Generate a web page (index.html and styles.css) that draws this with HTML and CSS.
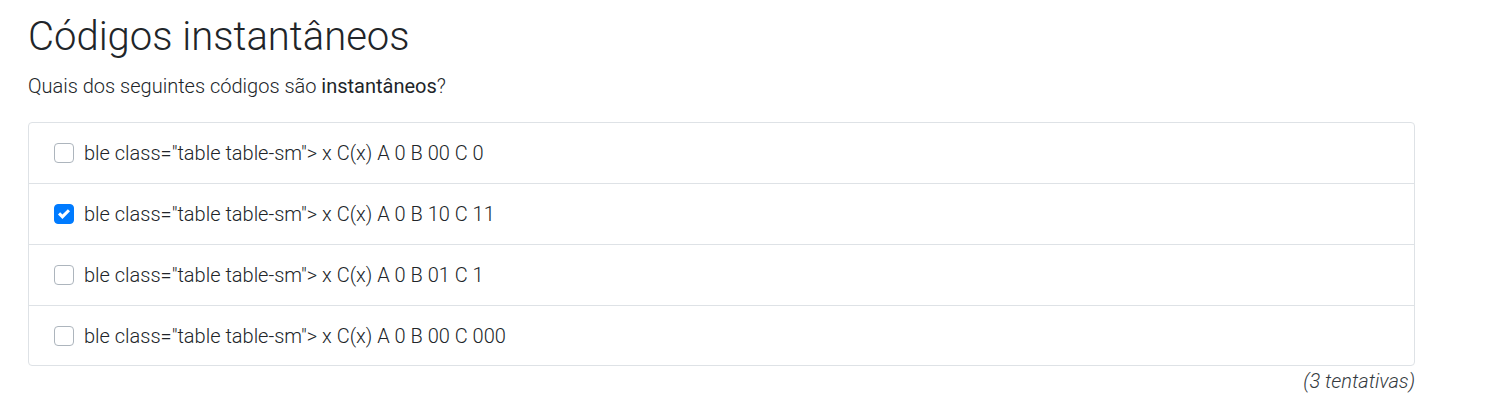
FILE: index.html
```html
<!DOCTYPE html>
<html lang="pt">
<head>
<meta charset="utf-8">
<link rel="stylesheet" href="styles.css">
</head>
<body>
<div class="page">
  <h1 class="title">Códigos instantâneos</h1>
  <p class="question">Quais dos seguintes códigos são <strong>instantâneos</strong>?</p>
  <ul class="options">
    <li class="option"><span class="box"></span><span class="label">ble class="table table-sm"&gt; x C(x) A 0 B 00 C 0</span></li>
    <li class="option"><span class="box checked"><svg viewBox="0 0 8 8" width="12" height="12"><path d="M6.564.75l-3.59 3.612-1.538-1.55L0 4.26l2.974 2.99L8 2.193z" fill="#fff"/></svg></span><span class="label">ble class="table table-sm"&gt; x C(x) A 0 B 10 C 11</span></li>
    <li class="option"><span class="box"></span><span class="label">ble class="table table-sm"&gt; x C(x) A 0 B 01 C 1</span></li>
    <li class="option"><span class="box"></span><span class="label">ble class="table table-sm"&gt; x C(x) A 0 B 00 C 000</span></li>
  </ul>
  <div class="attempts">(3 tentativas)</div>
</div>
</body>
</html>
```
FILE: styles.css
```css
* { box-sizing: border-box; }
html, body { margin: 0; padding: 0; background: #fff; }
body {
  font-family: Roboto, "Liberation Sans", sans-serif;
  font-weight: 300;
  color: #212529;
}
.page {
  width: 1387px;
  margin-left: 28px;
  padding-top: 13px;
}
.title {
  margin: 0;
  font-size: 40px;
  font-weight: 300;
  line-height: 48px;
}
.question {
  margin: 12px 0 0;
  font-size: 20px;
  line-height: 27px;
}
.question strong { font-weight: 400; }
.options {
  list-style: none;
  margin: 22px 0 0;
  padding: 0;
  border: 1px solid #dee2e6;
  border-radius: 4px;
}
.option {
  display: flex;
  align-items: center;
  height: 61px;
  padding: 0 25px;
  border-top: 1px solid #dee2e6;
  font-size: 20px;
}
.option:first-child { border-top: none; height: 60px; }
.option:last-child { height: 60px; }
.box {
  width: 20px;
  height: 20px;
  border: 1px solid #adb5bd;
  border-radius: 4px;
  margin-right: 10px;
  display: flex;
  align-items: center;
  justify-content: center;
  flex: none;
}
.box.checked { background: #007bff; border-color: #007bff; }
.attempts {
  text-align: right;
  font-style: italic;
  font-size: 20px;
  line-height: 27px;
  margin-top: 2px;
  color: #343a40;
}
```
